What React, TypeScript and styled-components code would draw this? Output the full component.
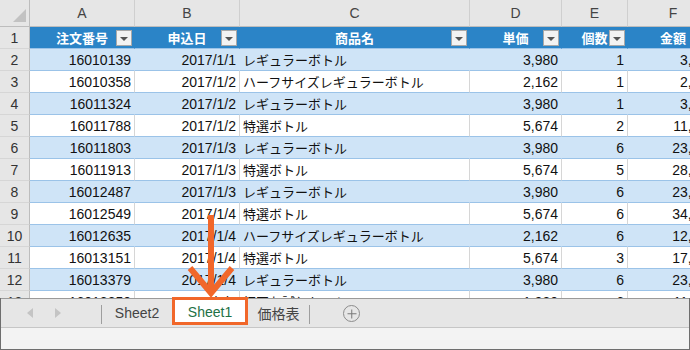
import styled, { createGlobalStyle } from "styled-components";

const GlobalStyle = createGlobalStyle`
  html, body {
    margin: 0;
    padding: 0;
    background: #fff;
  }
  body {
    font-family: "Liberation Sans", "Noto Sans CJK JP", sans-serif;
  }
`;

type Band = "header" | "odd" | "even";

const COLS = "30px 105px 105px 230px 92px 66px 91px";

const Frame = styled.div`
  position: relative;
  width: 690px;
  height: 350px;
  overflow: hidden;
  display: flex;
  flex-direction: column;
`;

const SheetArea = styled.div`
  height: 298px;
  overflow: hidden;
  flex-shrink: 0;
`;

const Row = styled.div<{ $head?: boolean }>`
  display: grid;
  grid-template-columns: ${COLS};
  width: 719px;
  height: ${(p) => (p.$head ? "27px" : "22px")};
`;

const Corner = styled.div`
  background: #e6e6e6;
  border-right: 1px solid #bdbdbd;
  border-bottom: 1px solid #bdbdbd;
  box-sizing: border-box;
  position: relative;
`;

const ColLetter = styled.div`
  background: #e6e6e6;
  border-right: 1px solid #cfcfcf;
  border-bottom: 1px solid #bdbdbd;
  box-sizing: border-box;
  display: flex;
  align-items: center;
  justify-content: center;
  font-size: 14px;
  color: #444;
`;

const RowNum = styled.div`
  background: #e6e6e6;
  border-right: 1px solid #bdbdbd;
  border-bottom: 1px solid #d6d6d6;
  box-sizing: border-box;
  display: flex;
  align-items: center;
  justify-content: center;
  font-size: 14px;
  color: #333;
`;

const bandBg = { header: "#2b84c7", odd: "#cfe4f7", even: "#ffffff" };
const bandLine = { header: "#2b84c7", odd: "#cfe4f7", even: "#d6d6d6" };

const Cell = styled.div<{ $band: Band; $align?: "left" | "right" | "center"; $jp?: boolean }>`
  position: relative;
  box-sizing: border-box;
  background: ${(p) => bandBg[p.$band]};
  border-right: 1px solid ${(p) => bandLine[p.$band]};
  border-bottom: 1px solid #9bc3e8;
  display: flex;
  align-items: center;
  justify-content: ${(p) =>
    p.$align === "left" ? "flex-start" : p.$align === "center" ? "center" : "flex-end"};
  padding: 0 3px;
  font-size: ${(p) => (p.$jp ? "13px" : "14px")};
  color: ${(p) => (p.$band === "header" ? "#fff" : "#111")};
  font-weight: ${(p) => (p.$band === "header" ? "bold" : "normal")};
  white-space: nowrap;
  overflow: hidden;
`;

const FilterButton = styled.span`
  position: absolute;
  right: 2px;
  top: 3px;
  width: 16px;
  height: 16px;
  box-sizing: border-box;
  background: #f3f3f3;
  border: 1px solid #a9a9a9;
  display: flex;
  align-items: center;
  justify-content: center;

  &::after {
    content: "";
    border-left: 4px solid transparent;
    border-right: 4px solid transparent;
    border-top: 4px solid #555;
    margin-top: 1px;
  }
`;

const Footer = styled.div`
  flex: 1;
  display: flex;
  flex-direction: column;
  border-left: 1px solid #6e6e6e;
  border-right: 1px solid #6e6e6e;
  border-bottom: 1px solid #6e6e6e;
`;

const TabBar = styled.div`
  height: 30px;
  box-sizing: border-box;
  background: #e6e6e6;
  border-top: 1px solid #9a9a9a;
  border-bottom: 1px solid #c6c6c6;
  display: flex;
  align-items: stretch;
`;

const Nav = styled.div`
  width: 100px;
  display: flex;
  align-items: center;
  padding-left: 26px;
  gap: 22px;
  box-sizing: border-box;
`;

const Arrow = styled.span<{ $dir: "left" | "right" }>`
  width: 0;
  height: 0;
  border-top: 5px solid transparent;
  border-bottom: 5px solid transparent;
  ${(p) =>
    p.$dir === "left"
      ? "border-right: 6px solid #c4c4c4;"
      : "border-left: 6px solid #c4c4c4;"}
`;

const Divider = styled.span`
  width: 1px;
  height: 19px;
  align-self: center;
  margin-top: 2px;
  background: #9e9e9e;
`;

const Tab = styled.div<{ $w: number; $active?: boolean }>`
  position: relative;
  width: ${(p) => p.$w}px;
  display: flex;
  align-items: center;
  justify-content: center;
  font-size: 14px;
  color: ${(p) => (p.$active ? "#1e7145" : "#444")};
  background: ${(p) => (p.$active ? "#fff" : "transparent")};
  margin-bottom: ${(p) => (p.$active ? "3px" : "0")};

  ${(p) =>
    p.$active &&
    `
    &::after {
      content: "";
      position: absolute;
      left: 0;
      right: 0;
      top: -2px;
      bottom: -1px;
      border: 3px solid #f1672a;
    }
  `}
`;

const AddSheet = styled.span`
  align-self: center;
  margin-left: 33px;
  width: 17px;
  height: 17px;
  box-sizing: border-box;
  border: 1.5px solid #8c8c8c;
  border-radius: 50%;
  position: relative;
  margin-top: 1px;

  &::before,
  &::after {
    content: "";
    position: absolute;
    background: #7a7a7a;
    left: 50%;
    top: 50%;
    transform: translate(-50%, -50%);
  }
  &::before {
    width: 9px;
    height: 1.5px;
  }
  &::after {
    width: 1.5px;
    height: 9px;
  }
`;

const StatusStrip = styled.div`
  flex: 1;
  background: #f3f3f3;
`;

const Pointer = styled.svg`
  position: absolute;
  left: 0;
  top: 0;
  pointer-events: none;
`;

type Order = [string, string, string, string, string, string];

const rows: Order[] = [
  ["16010139", "2017/1/1", "レギュラーボトル", "3,980", "1", "3,980"],
  ["16010358", "2017/1/2", "ハーフサイズレギュラーボトル", "2,162", "1", "2,162"],
  ["16011324", "2017/1/2", "レギュラーボトル", "3,980", "1", "3,980"],
  ["16011788", "2017/1/2", "特選ボトル", "5,674", "2", "11,348"],
  ["16011803", "2017/1/3", "レギュラーボトル", "3,980", "6", "23,880"],
  ["16011913", "2017/1/3", "特選ボトル", "5,674", "5", "28,370"],
  ["16012487", "2017/1/3", "レギュラーボトル", "3,980", "6", "23,880"],
  ["16012549", "2017/1/4", "特選ボトル", "5,674", "6", "34,044"],
  ["16012635", "2017/1/4", "ハーフサイズレギュラーボトル", "2,162", "6", "12,972"],
  ["16013151", "2017/1/4", "特選ボトル", "5,674", "3", "17,022"],
  ["16013379", "2017/1/4", "レギュラーボトル", "3,980", "6", "23,880"],
  ["16013850", "2017/1/4", "初回お試しセット", "1,980", "6", "11,880"],
];

const headers = ["注文番号", "申込日", "商品名", "単価", "個数", "金額"];
const letters = ["A", "B", "C", "D", "E", "F"];

const App = () => {
  return (
    <Frame>
      <GlobalStyle />
      <SheetArea>
        <Row $head>
          <Corner>
            <svg width="29" height="26" style={{ display: "block" }}>
              <polygon points="26,9 26,22 13,22" fill="#c2c2c2" />
            </svg>
          </Corner>
          {letters.map((l) => (
            <ColLetter key={l}>{l}</ColLetter>
          ))}
        </Row>
        <Row>
          <RowNum>1</RowNum>
          {headers.map((h) => (
            <Cell key={h} $band="header" $align="center" $jp>
              {h}
              <FilterButton />
            </Cell>
          ))}
        </Row>
        {rows.map((r, i) => {
          const band: Band = i % 2 === 0 ? "odd" : "even";
          return (
            <Row key={r[0]}>
              <RowNum>{i + 2}</RowNum>
              <Cell $band={band}>{r[0]}</Cell>
              <Cell $band={band}>{r[1]}</Cell>
              <Cell $band={band} $align="left" $jp>
                {r[2]}
              </Cell>
              <Cell $band={band}>{r[3]}</Cell>
              <Cell $band={band}>{r[4]}</Cell>
              <Cell $band={band}>{r[5]}</Cell>
            </Row>
          );
        })}
      </SheetArea>
      <Footer>
        <TabBar>
          <Nav>
            <Arrow $dir="left" />
            <Arrow $dir="right" />
          </Nav>
          <Divider />
          <Tab $w={70}>Sheet2</Tab>
          <Tab $w={76} $active>
            Sheet1
          </Tab>
          <Tab $w={61}>価格表</Tab>
          <Divider />
          <AddSheet />
        </TabBar>
        <StatusStrip />
      </Footer>
      <Pointer width="690" height="350">
        <g stroke="#f1672a" strokeWidth="6" fill="none">
          <line x1="211" y1="215" x2="211" y2="292" />
          <polyline points="190,268 211,293 232,268" strokeLinejoin="miter" />
        </g>
      </Pointer>
    </Frame>
  );
};

export default App;
